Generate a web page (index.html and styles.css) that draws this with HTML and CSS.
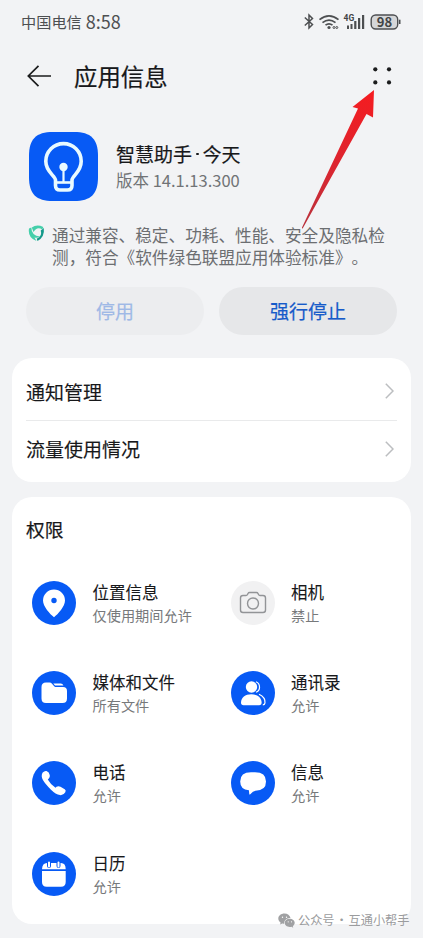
FILE: index.html
```html
<!DOCTYPE html>
<html lang="zh-CN">
<head>
<meta charset="utf-8">
<title>应用信息</title>
<link rel="stylesheet" href="styles.css">
</head>
<body>
<div class="screen">
  <header class="status">
    <span class="carrier">中国电信</span><span class="time">8:58</span>
    <svg class="status-icons" width="102" height="20" viewBox="0 0 102 20" fill="none" stroke="#4d4f51">
      <path d="M.8 6.500 8.500 13.500 5 17V4L8.500 7.500.8 14.500" stroke-width="1.500"/>
      <path d="M15.500 8.700q9.500-7.600 19 0M18.500 11.600q6.500-5 13 0M21.500 14.200q3.500-2.700 7 0" stroke-width="1.700"/>
      <circle cx="25" cy="16.500" r="1.600" fill="#4d4f51" stroke="none"/>
      <circle cx="30" cy="16.500" r="1" stroke-width="1"/><circle cx="32.800" cy="16.500" r="1" stroke-width="1"/>
      <g fill="#4d4f51" stroke="none"><rect x="43" y="14.500" width="2" height="3.500"/><rect x="46.500" y="13" width="2" height="5"/><rect x="50.200" y="10" width="2.200" height="8"/><rect x="54" y="7" width="2.200" height="11"/><rect x="58" y="4" width="2.200" height="14"/></g>
      <text class="net" x="39.500" y="10">4G</text>
      <rect x="67.200" y="4" width="26.500" height="14" rx="4.500" fill="#d5d6d8" stroke-width="1.400"/>
      <path d="M95.700 8.700v4.300" stroke-width="1.600"/>
      <text class="level" x="80.500" y="15.500">98</text>
    </svg>
  </header>
  <div class="topbar">
    <svg class="back" width="26" height="26" viewBox="0 0 26 26" fill="none" stroke="#1b1c1d" stroke-width="1.700"><path d="M25 13H2.500M12.500 2.800 2.300 13l10.200 10.200"/></svg>
    <h1>应用信息</h1>
    <svg class="more" width="20" height="20" viewBox="0 0 20 20" fill="#1b1c1d"><circle cx="3.300" cy="3.300" r="2.100"/><circle cx="17" cy="3.300" r="2.100"/><circle cx="3.300" cy="16.400" r="2.100"/><circle cx="17" cy="16.400" r="2.100"/></svg>
  </div>
  <section class="app">
    <svg class="app-icon" width="69" height="69" viewBox="0 0 69 69">
      <path d="M24 0h21C62 0 69 7 69 24v21c0 17-7 24-24 24H24C7 69 0 62 0 45V24C0 7 7 0 24 0Z" fill="#075af5"/>
      <g fill="none" stroke="#e9faff" stroke-width="3.600" stroke-linejoin="round"><path d="M26.500 53.500V48C26 43.500 16.800 40 16.800 29.300a17.700 17.700 0 0 1 35.400 0C52.200 40 43.500 43.500 43 48v5.500q0 4.500-4.500 4.500h-7.500q-4.500 0-4.500-4.500Z"/><path d="M27 50.500h16" stroke-width="2.600"/><path d="M34.500 35v15" stroke-width="2.200"/></g>
      <circle cx="34.500" cy="35" r="4.200" fill="#e9faff"/>
    </svg>
    <div><h2><span>智慧助手</span><span class="dot"></span><span>今天</span></h2><p class="version">版本 <span>14.1.13.300</span></p></div>
  </section>
  <section class="notice">
    <svg width="17" height="17" viewBox="0 0 17 17" fill="none"><path d="M1 3.500 3.300 2.500Q3.500 11 12 11.500q-3 2-5.500 1l2 3.500Q-.5 13 1 3.500Z" fill="#45cfaa"/><path d="M15.800 3q1.200 9-6.300 13l-.8-2.200q6-2.500 4-8.300Z" fill="#169a8b"/><path d="M3.800 2.500q5-3.500 11.500-.5l-1 2.500Q9 1 5.500 7Z" fill="#45cfaa"/></svg>
    <p>通过兼容、稳定、功耗、性能、安全及隐私检<br>测，符合《软件绿色联盟应用体验标准》。</p>
  </section>
  <div class="actions"><button class="disabled">停用</button><button>强行停止</button></div>
  <section class="card links">
    <div class="link">通知管理<svg width="9" height="16" viewBox="0 0 9 16"><path d="M.8.800 8 8 .8 15.200"/></svg></div>
    <div class="link">流量使用情况<svg width="9" height="16" viewBox="0 0 9 16"><path d="M.8.800 8 8 .8 15.200"/></svg></div>
  </section>
  <section class="card permissions">
    <h3>权限</h3>
    <div class="grid">
      <div class="perm"><svg class="ic" viewBox="0 0 44 44"><circle cx="22" cy="22" r="22"/><path class="w" fill-rule="evenodd" d="M22 36.300C18 33 11 25.500 11 19.500a11 11 0 0 1 22 0C33 25.500 26 33 22 36.300ZM22 16.800a2.700 2.700 0 1 0 0 5.400 2.700 2.700 0 0 0 0-5.400Z"/></svg><div><b>位置信息</b><small>仅使用期间允许</small></div></div>
      <div class="perm"><svg class="ic off" viewBox="0 0 44 44"><circle cx="22" cy="22" r="22"/><g fill="none" stroke="#929497" stroke-width="1.400"><path d="M12 14.500h3q1 0 1.500-1l.5-1q.5-1 1.500-1h7q1 0 1.500 1l.5 1q.5 1 1.500 1h3q2.500 0 2.500 2.500v12q0 2.500-2.500 2.500H12q-2.500 0-2.500-2.500V17q0-2.500 2.500-2.500Z"/><circle cx="22" cy="22.500" r="5.500"/></g></svg><div><b>相机</b><small>禁止</small></div></div>
      <div class="perm"><svg class="ic" viewBox="0 0 44 44"><circle cx="22" cy="22" r="22"/><path class="w" d="M9.500 16Q9.500 11.500 14 11.500h3.500q1.500 0 2.500 1.200l2.200 2.500q.8.900 2 .9H31q4 0 4 4v7.400q0 4.500-4.500 4.500H14q-4.500 0-4.500-4.500Z"/><path class="w" d="M21.300 12.600h7.500q1.700 0 2.700 2h-7.700q-.7 0-1.200-.6Z"/></svg><div><b>媒体和文件</b><small>所有文件</small></div></div>
      <div class="perm"><svg class="ic" viewBox="0 0 44 44"><circle cx="22" cy="22" r="22"/><circle class="w" cx="20.500" cy="16" r="5.700"/><path class="w" d="M10 31.500c0-5 4.300-8.300 10.300-8.300s10.300 3.300 10.300 8.300q0 2.700-2.500 2.700H12.500q-2.500 0-2.500-2.700Z"/><path d="M25 10.800c4.700 2 4.700 8.800 0 10.500M28 23.300q6.500 3 6 8.500-.3 2-2.200 2" fill="none" stroke="#fff" stroke-width="1.200"/></svg><div><b>通讯录</b><small>允许</small></div></div>
      <div class="perm"><svg class="ic" viewBox="0 0 44 44"><circle cx="22" cy="22" r="22"/><path class="w" d="M10.500 11.800q2-2.300 4-1.800 2.800 1 3.300 4.200.4 2.300-1.200 3.600l-.8.700q3 5.300 7.700 8.300l1-1q1.800-1.300 4 0l4.200 2.500q1.700 1.200.6 3-1.800 3.200-5.300 2.800-4.300-.6-9-5.300-6.200-6.300-8.200-10-2-3.700-.3-7Z"/></svg><div><b>电话</b><small>允许</small></div></div>
      <div class="perm"><svg class="ic" viewBox="0 0 44 44"><circle cx="22" cy="22" r="22"/><path class="w" d="M20 11.300h4q11 0 11 9.200t-10.500 9.200q-2.500 0-5.200 3.500-.8.800-1 0l-.4-3.900Q9.200 28.600 9.200 20.500q0-9.200 10.800-9.200Z"/></svg><div><b>信息</b><small>允许</small></div></div>
      <div class="perm"><svg class="ic" viewBox="0 0 44 44"><circle cx="22" cy="22" r="22"/><path class="w" d="M10 17.300q.3-6.300 5-6.300h14q4.700 0 4.700 6.300ZM10 19h23.700v11q0 4.700-4.700 4.700H14.700Q10 34.700 10 30Z"/><path d="M17 9v5M26.500 9v5" stroke="#075af5" stroke-width="4" stroke-linecap="round"/><path d="M17 10.500v4M26.500 10.500v4" stroke="#fff" stroke-width="2" stroke-linecap="round"/></svg><div><b>日历</b><small>允许</small></div></div>
    </div>
  </section>
</div>
<svg class="pointer" width="80" height="145" viewBox="0 0 80 145"><defs><linearGradient id="red" x1="0" y1="1" x2="0" y2="0"><stop offset="0" stop-color="#b8323c"/><stop offset=".45" stop-color="#dc2530"/><stop offset="1" stop-color="#f51c20"/></linearGradient></defs><path d="M74 0 52.500 17l5.500 1.500L2 137.500q-.2 1.400.8.800L66.500 24l6.500 3.500Z" fill="url(#red)"/></svg>
<div class="watermark"><svg width="17" height="15" viewBox="0 0 17 15"><path d="M6.500.5C3 .5.300 2.700.300 5.600c0 1.700.9 3.100 2.300 4l-.5 1.900 2.200-1.100c.6.200 1.300.3 2 .3C5.800 7.500 8.500 5 12.500 5 12 2.400 9.500.5 6.500.5Z"/><path d="M11.700 5.700c-2.800 0-5 1.800-5 4.100s2.200 4.200 5 4.200c.6 0 1.200-.1 1.700-.3l1.800 1-.4-1.600c1.200-.8 1.900-2 1.900-3.300 0-2.300-2.200-4.100-5-4.100Z"/><g fill="#fff"><circle cx="4.500" cy="4.200" r=".7"/><circle cx="8.500" cy="4.200" r=".7"/><circle cx="10.200" cy="8.800" r=".6"/><circle cx="13.500" cy="8.800" r=".6"/></g></svg><span>公众号</span><span class="sep">·</span><span>互通小帮手</span></div>
</body>
</html>
```
FILE: styles.css
```css
* { box-sizing: border-box; margin: 0; padding: 0; }
body { width: 423px; height: 938px; overflow: hidden; background: #f2f3f5; color: #17181a; font-family: "Noto Sans", "Noto Sans CJK SC", sans-serif; }
h1, h2, h3, b { font-family: "Noto Sans CJK SC", sans-serif; font-weight: 400; -webkit-text-stroke: .2px currentColor; }
.screen { padding: 0 12px; }
.status { height: 42px; padding: 0 9px; display: flex; align-items: center; color: #4d4f51; white-space: nowrap; }
.carrier { font: 15.2px "Noto Sans CJK SC", sans-serif; }
.time { margin-left: 4px; font: 18px/24px "Noto Sans CJK SC", sans-serif; }
.status-icons { margin-left: auto; margin-right: -4px; }
.status-icons text { stroke: none; fill: #424446; }
.net { font: bold 8.500px Roboto, sans-serif; }
.level { font: bold 13px "Noto Sans CJK SC", sans-serif; text-anchor: middle; }
.topbar { height: 68px; padding: 0 19px 0 14px; display: flex; align-items: center; }
.topbar h1 { margin-left: 22px; font-size: 23.400px; line-height: 32px; }
.more { margin-left: auto; }
.app { height: 113px; padding-left: 17px; display: flex; align-items: center; gap: 18px; }
.app h2 { display: flex; align-items: center; font-size: 19px; line-height: 28px; }
.dot { width: 2.500px; height: 2.500px; margin: 0 4px; border-radius: 50%; background: #17181a; }
.version { color: #717376; font: 16.500px/25px "Noto Sans CJK SC", sans-serif; }
.notice { height: 64px; padding: 1px 0 0 16px; display: flex; gap: 7px; color: #6c6e71; }
.notice svg { margin-top: 1px; flex: none; }
.notice p { font: 16.650px/22px "Noto Sans CJK SC", sans-serif; white-space: nowrap; text-spacing-trim: space-all; }
.actions { padding: 0 14px; display: grid; grid-template-columns: 1fr 1fr; gap: 15px; }
button { height: 48px; padding-bottom: 2px; border: 0; border-radius: 24px; background: #e6e7e9; color: #175bc9; font: 19px "Noto Sans CJK SC", sans-serif; -webkit-text-stroke: .2px currentColor; }
button.disabled { background: #ecedef; color: #9fb9e6; }
.card { background: #fff; border-radius: 20px; padding: 0 14px; }
.links { height: 124px; margin-top: 23px; padding-top: 5px; }
.link { height: 57px; padding-bottom: 1px; display: flex; align-items: center; justify-content: space-between; font: 19px "Noto Sans CJK SC", sans-serif; -webkit-text-stroke: .15px currentColor; }
.link + .link { border-top: 1px solid #e9eaeb; }
.link svg { margin-right: 3px; fill: none; stroke: #bcbec0; stroke-width: 1.500; }
.permissions { height: 427px; margin-top: 15px; padding-top: 18px; }
.permissions h3 { font-size: 18.700px; line-height: 28px; }
.grid { display: grid; grid-template-columns: 198.500px 1fr; grid-auto-rows: 90.200px; padding: 15px 0 0 6px; }
.perm { display: flex; align-items: center; gap: 16.500px; white-space: nowrap; }
.ic { width: 44px; height: 44px; flex: none; fill: #075af5; }
.off { fill: #f1f1f2; }
.w { fill: #fff; }
.perm b, .perm small { display: block; }
.perm b { font-size: 16.500px; line-height: 24px; -webkit-text-stroke-width: .1px; }
.perm small { font: 14.200px/22px "Noto Sans CJK SC", sans-serif; color: #77797b; }
.pointer { position: absolute; left: 300px; top: 90px; }
.watermark { position: absolute; left: 278px; top: 910px; height: 20px; display: flex; align-items: center; color: #9b9c9e; font: 12.200px "Noto Sans CJK SC", sans-serif; white-space: nowrap; }
.watermark svg { margin-right: 3px; fill: #a0a1a3; }
.sep { width: 14px; text-align: center; }
```
